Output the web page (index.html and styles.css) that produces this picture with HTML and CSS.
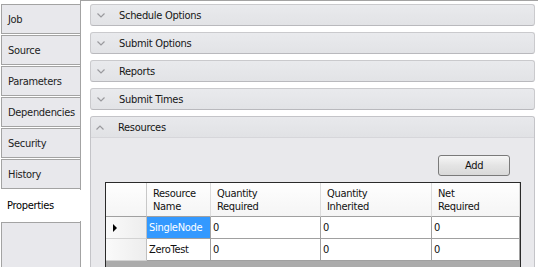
FILE: index.html
```html
<!DOCTYPE html>
<html>
<head>
<meta charset="utf-8">
<link rel="stylesheet" href="styles.css">
</head>
<body>
<div class="window">
  <nav class="tabs">
    <div class="tab">Job</div>
    <div class="tab">Source</div>
    <div class="tab">Parameters</div>
    <div class="tab">Dependencies</div>
    <div class="tab">Security</div>
    <div class="tab">History</div>
    <div class="tab active">Properties</div>
    <div class="tab-fill"></div>
  </nav>
  <main class="pane">
    <section class="acc">
      <div class="acc-head"><svg class="chev" width="8" height="5" viewBox="0 0 8 5"><polyline points="0.5,0.5 4,4 7.5,0.5"/></svg><span>Schedule Options</span></div>
    </section>
    <section class="acc">
      <div class="acc-head"><svg class="chev" width="8" height="5" viewBox="0 0 8 5"><polyline points="0.5,0.5 4,4 7.5,0.5"/></svg><span>Submit Options</span></div>
    </section>
    <section class="acc">
      <div class="acc-head"><svg class="chev" width="8" height="5" viewBox="0 0 8 5"><polyline points="0.5,0.5 4,4 7.5,0.5"/></svg><span>Reports</span></div>
    </section>
    <section class="acc">
      <div class="acc-head"><svg class="chev" width="8" height="5" viewBox="0 0 8 5"><polyline points="0.5,0.5 4,4 7.5,0.5"/></svg><span>Submit Times</span></div>
    </section>
    <section class="acc open">
      <div class="acc-head"><svg class="chev" width="8" height="5" viewBox="0 0 8 5"><polyline points="0.5,4.5 4,1 7.5,4.5"/></svg><span>Resources</span></div>
      <div class="acc-body">
        <div class="actions"><button class="btn">Add</button></div>
        <div class="grid">
          <table>
            <colgroup>
              <col class="c-rh"><col class="c-name"><col class="c-qr"><col class="c-qi"><col class="c-nr">
            </colgroup>
            <thead>
              <tr>
                <th class="rh"></th>
                <th>Resource<br>Name</th>
                <th>Quantity<br>Required</th>
                <th>Quantity<br>Inherited</th>
                <th>Net<br>Required</th>
              </tr>
            </thead>
            <tbody>
              <tr>
                <td class="rh"><span class="pointer"></span></td>
                <td class="sel">SingleNode</td>
                <td>0</td>
                <td>0</td>
                <td>0</td>
              </tr>
              <tr>
                <td class="rh"></td>
                <td>ZeroTest</td>
                <td>0</td>
                <td>0</td>
                <td>0</td>
              </tr>
            </tbody>
          </table>
        </div>
      </div>
    </section>
  </main>
</div>
</body>
</html>
```
FILE: styles.css
```css
html, body {
  margin: 0;
  height: 100%;
  overflow: hidden;
  background: #fff;
  font: 11px "DejaVu Sans Condensed", "DejaVu Sans", sans-serif;
  font-stretch: condensed;
  letter-spacing: -0.3px;
  color: #111;
}

.window {
  display: flex;
  height: 267px;
}

.tabs {
  width: 80px;
  flex: none;
  display: flex;
  flex-direction: column;
  gap: 1px;
  padding-top: 4px;
  box-sizing: border-box;
}

.tab {
  height: 30px;
  box-sizing: border-box;
  margin-left: 1px;
  border: 1px solid #a3a3a3;
  border-right: none;
  background: #e8e8ec;
  display: flex;
  align-items: center;
  padding-left: 6px;
  color: #222;
  white-space: nowrap;
}

.tab.active {
  height: 31px;
  margin-left: 0;
  margin-right: -1px;
  border: none;
  background: #fff;
  padding-left: 7px;
  position: relative;
  z-index: 1;
  color: #000;
}

.tab-fill {
  flex: 1;
  margin-left: 1px;
  border: 1px solid #a3a3a3;
  border-right: none;
  border-bottom: none;
  background: #e8e8ec;
}

.pane {
  flex: 1;
  border-left: 1px solid #a3a3a3;
  border-top: 1px solid #a3a3a3;
  padding: 3px 3px 0 9px;
  display: flex;
  flex-direction: column;
  gap: 6px;
  min-width: 0;
}

.acc-head {
  height: 22px;
  box-sizing: border-box;
  border: 1px solid #cacacd;
  border-bottom-color: #b9b9bd;
  border-radius: 3px;
  background: linear-gradient(#e9eaed, #e2e3e6);
  display: flex;
  align-items: center;
  padding-left: 6px;
  color: #161616;
}

.chev {
  flex: none;
  margin-right: 14px;
}

.chev polyline {
  fill: none;
  stroke: #9a9a9e;
  stroke-width: 1.2;
}

.acc.open {
  flex: 1;
  display: flex;
  flex-direction: column;
  border: 1px solid #c4c4c8;
  border-bottom: none;
  border-radius: 3px 3px 0 0;
  background: #e9e9ec;
  min-height: 0;
}

.acc.open .acc-head {
  border: none;
  border-bottom: 1px solid #d6d6da;
  border-radius: 3px 3px 0 0;
  height: 21px;
  padding-left: 5px;
  background: linear-gradient(#e8e9ec, #e1e2e5);
}

.acc-body {
  flex: 1;
  display: flex;
  flex-direction: column;
  padding: 17px 13px 0 14px;
  min-height: 0;
}

.actions {
  display: flex;
  justify-content: flex-end;
  padding-right: 11px;
}

.btn {
  width: 72px;
  height: 21px;
  border: 1px solid #7a7a7a;
  border-radius: 3px;
  background: linear-gradient(#f6f6f6, #e4e4e4 50%, #d9d9d9);
  font: inherit;
  letter-spacing: inherit;
  color: #111;
  padding: 0;
}

.grid {
  margin-top: 6px;
  flex: 1;
  border: 1px solid #2a2a2a;
  border-bottom: none;
  background: #ababab;
}

table {
  border-collapse: separate;
  border-spacing: 0;
  table-layout: fixed;
  width: 414px;
}

.c-rh { width: 41px; }
.c-name { width: 64px; }
.c-qr { width: 110px; }
.c-qi { width: 111px; }
.c-nr { width: 88px; }

th {
  height: 34px;
  box-sizing: border-box;
  padding: 0 0 0 6px;
  text-align: left;
  font-weight: normal;
  line-height: 13px;
  background: linear-gradient(#fefefe, #f5f5f5);
  border-right: 1px solid #dcdcdc;
  border-bottom: 1px solid #a0a0a0;
  color: #111;
}

th.rh {
  border-right: 1px solid #c8c8c8;
}

td {
  height: 22px;
  box-sizing: border-box;
  padding: 0 0 0 2px;
  background: #fff;
  border-right: 1px solid #a0a0a0;
  border-bottom: 1px solid #a0a0a0;
  white-space: nowrap;
  overflow: hidden;
}

td.rh {
  background: linear-gradient(to right, #fafafa, #ededed);
  border-right: 1px solid #c0c0c0;
  border-bottom: 1px solid #d2d2d2;
  padding-left: 7px;
}

td.sel {
  background: #3399ff;
  color: #fff;
}

.pointer {
  display: block;
  width: 0;
  height: 0;
  border-top: 4px solid transparent;
  border-bottom: 4px solid transparent;
  border-left: 4px solid #000;
}
```
